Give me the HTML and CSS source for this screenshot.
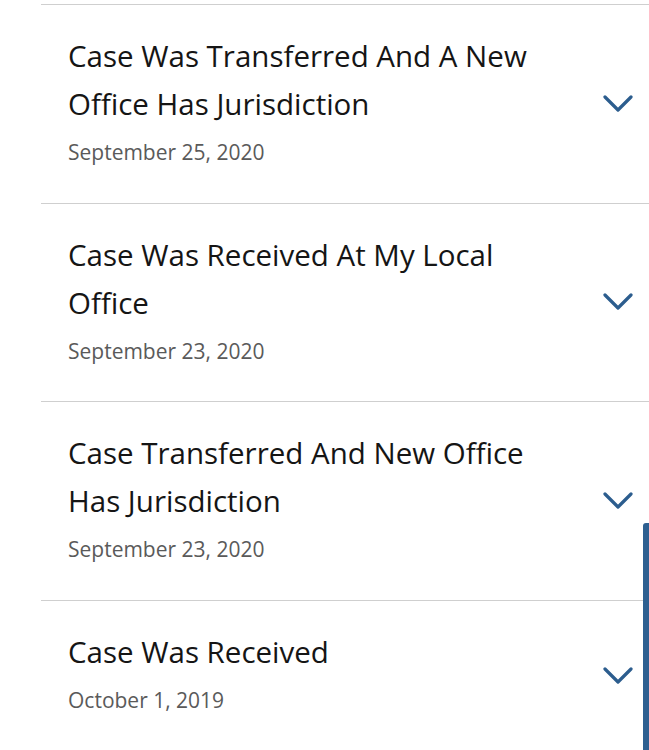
FILE: index.html
```html
<!DOCTYPE html>
<html lang="en">
<head>
<meta charset="utf-8">
<title>Case History</title>
<link rel="stylesheet" href="styles.css">
</head>
<body>
<ul class="history">
  <li class="item">
    <div class="text">
      <div class="title">Case Was Transferred And A New Office Has Jurisdiction</div>
      <div class="date">September 25, 2020</div>
    </div>
    <svg class="chev" viewBox="0 0 30 18" aria-hidden="true"><path d="M2 2 L15 15 L28 2"/></svg>
  </li>
  <li class="item">
    <div class="text">
      <div class="title">Case Was Received At My Local Office</div>
      <div class="date">September 23, 2020</div>
    </div>
    <svg class="chev" viewBox="0 0 30 18" aria-hidden="true"><path d="M2 2 L15 15 L28 2"/></svg>
  </li>
  <li class="item">
    <div class="text">
      <div class="title">Case Transferred And New Office Has Jurisdiction</div>
      <div class="date">September 23, 2020</div>
    </div>
    <svg class="chev" viewBox="0 0 30 18" aria-hidden="true"><path d="M2 2 L15 15 L28 2"/></svg>
  </li>
  <li class="item">
    <div class="text">
      <div class="title">Case Was Received</div>
      <div class="date">October 1, 2019</div>
    </div>
    <svg class="chev" viewBox="0 0 30 18" aria-hidden="true"><path d="M2 2 L15 15 L28 2"/></svg>
  </li>
</ul>
<div class="scrollbar"></div>
</body>
</html>
```

FILE: styles.css
```css
html, body {
  margin: 0;
  padding: 0;
  background: #ffffff;
  overflow: hidden;
}
body {
  font-family: "Open Sans", "Lato", sans-serif;
  color: #1a1a1a;
}
.history {
  list-style: none;
  margin: 0;
  padding: 4px 0 0 41px;
}
.item {
  display: flex;
  align-items: center;
  border-top: 1px solid #cfcfcf;
  padding: 27px 16px 36.7px 27px;
}
.text {
  flex: 1;
  min-width: 0;
}
.title {
  max-width: 490px;
  font-size: 29.5px;
  line-height: 48px;
  color: #151515;
}
.date {
  margin-top: 10px;
  font-size: 21px;
  line-height: 28px;
  color: #5a5a5a;
}
.chev {
  width: 30px;
  height: 18px;
  margin-top: 9px;
  flex: none;
  fill: none;
  stroke: #2c5d8e;
  stroke-width: 3.2;
  stroke-linecap: round;
  stroke-linejoin: round;
}
.scrollbar {
  position: fixed;
  right: 0;
  top: 523px;
  bottom: 0;
  width: 6px;
  background: #2d5f90;
  border-radius: 3px 0 0 0;
}
```
